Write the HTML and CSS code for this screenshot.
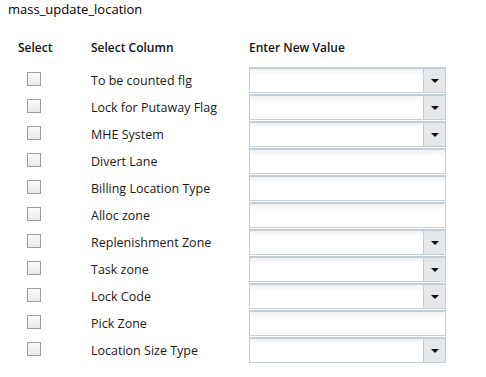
FILE: index.html
```html
<!DOCTYPE html>
<html lang="en">
<head>
    <meta charset="UTF-8">
    <title>mass_update_location</title>
    <link rel="stylesheet" href="styles.css">
</head>
<body>
    <div class="page-title">mass_update_location</div>

    <div class="update-grid">
        <div class="head col-select">Select</div>
        <div class="head">Select Column</div>
        <div class="head">Enter New Value</div>

        <div class="cell col-select"><span class="check"></span></div>
        <div class="cell label">To be counted flg</div>
        <div class="cell"><div class="field select"><span class="arrow"></span></div></div>

        <div class="cell col-select"><span class="check"></span></div>
        <div class="cell label">Lock for Putaway Flag</div>
        <div class="cell"><div class="field select"><span class="arrow"></span></div></div>

        <div class="cell col-select"><span class="check"></span></div>
        <div class="cell label">MHE System</div>
        <div class="cell"><div class="field select"><span class="arrow"></span></div></div>

        <div class="cell col-select"><span class="check"></span></div>
        <div class="cell label">Divert Lane</div>
        <div class="cell"><div class="field"></div></div>

        <div class="cell col-select"><span class="check"></span></div>
        <div class="cell label">Billing Location Type</div>
        <div class="cell"><div class="field"></div></div>

        <div class="cell col-select"><span class="check"></span></div>
        <div class="cell label">Alloc zone</div>
        <div class="cell"><div class="field"></div></div>

        <div class="cell col-select"><span class="check"></span></div>
        <div class="cell label">Replenishment Zone</div>
        <div class="cell"><div class="field select"><span class="arrow"></span></div></div>

        <div class="cell col-select"><span class="check"></span></div>
        <div class="cell label">Task zone</div>
        <div class="cell"><div class="field select"><span class="arrow"></span></div></div>

        <div class="cell col-select"><span class="check"></span></div>
        <div class="cell label">Lock Code</div>
        <div class="cell"><div class="field select"><span class="arrow"></span></div></div>

        <div class="cell col-select"><span class="check"></span></div>
        <div class="cell label">Pick Zone</div>
        <div class="cell"><div class="field"></div></div>

        <div class="cell col-select"><span class="check"></span></div>
        <div class="cell label">Location Size Type</div>
        <div class="cell"><div class="field select"><span class="arrow"></span></div></div>
    </div>
</body>
</html>
```

FILE: styles.css
```css
body {
    margin: 0;
    background: #ffffff;
    font-family: "Open Sans", "Liberation Sans", sans-serif;
    color: #222;
}

.page-title {
    font-size: 13px;
    line-height: 18px;
    padding: 0 8px;
    color: #000;
}

.update-grid {
    display: grid;
    grid-template-columns: 91px 158px 197px;
    grid-template-rows: 30px;
    grid-auto-rows: 27px;
    margin-top: 19px;
}

.head {
    font-size: 12px;
    font-weight: 600;
    line-height: 22px;
    color: #111;
}

.col-select {
    padding-left: 18px;
}

.cell {
    height: 27px;
}

.cell.label {
    font-size: 12.5px;
    line-height: 27px;
    color: #221818;
}

.check {
    display: block;
    width: 12px;
    height: 12px;
    margin: 5px 0 0 9px;
    border: 1px solid #9d9d9d;
    background: linear-gradient(#fbfbfb, #e9e9e9);
}

.field {
    position: relative;
    box-sizing: border-box;
    height: 26px;
    border: 1px solid #c4ced7;
    border-top-width: 2px;
    background: linear-gradient(#f1f1f1, #ffffff 6px);
}

.field.select {
    padding-right: 22px;
}

.arrow {
    position: absolute;
    top: 0;
    right: 0;
    bottom: 0;
    width: 21px;
    border-left: 1px solid #c4ced7;
    background: #e4e8eb;
}

.arrow::after {
    content: '';
    position: absolute;
    left: 7px;
    top: 10px;
    border-left: 4px solid transparent;
    border-right: 4px solid transparent;
    border-top: 4px solid #111;
}
```
